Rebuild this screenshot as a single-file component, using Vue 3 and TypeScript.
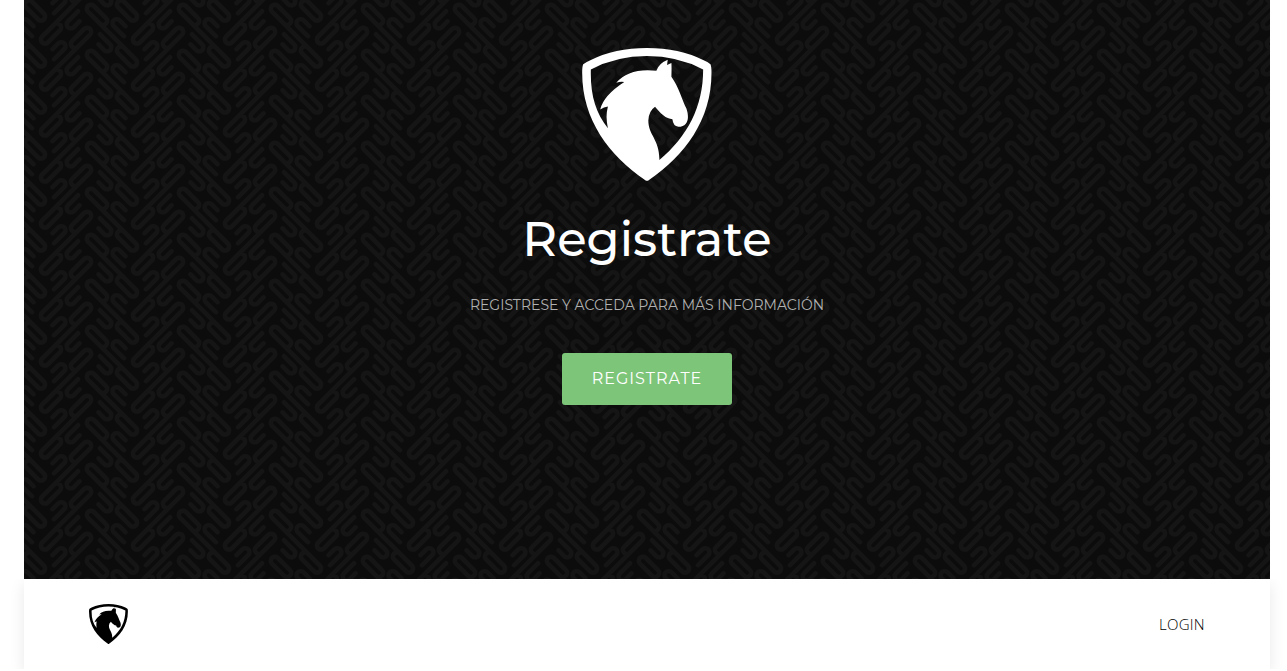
<script setup lang="ts">
interface Action {
  label: string
}

const title = 'Registrate'
const subtitle = 'REGISTRESE Y ACCEDA PARA MÁS INFORMACIÓN'
const action: Action = { label: 'REGISTRATE' }
const links: string[] = ['LOGIN']
</script>

<template>
  <div class="page">
    <svg width="0" height="0" class="defs">
      <symbol id="horse-shield" viewBox="30 24 388 398">
        <path
          fill-rule="evenodd"
          d="M33 73Q40 67 56 60Q127 24 224 24Q321 24 392 60Q407 66 414 73Q417 80 417 98C417 240 337 345 230 419Q224 424 218 419C111 345 30 240 30 98Q30 80 33 73ZM56 88C54 164 70 218 107 264Q99 230 107 199Q95 201 84 208Q94 166 156 126Q145 124 132 128Q170 83 252 92Q259 70 286 59L284 75L297 69Q298 82 297 110C319 140 329 180 342 205C352 235 346 260 318 260Q302 257 300 237C282 237 263 219 248 200Q229 213 228 241C228 285 262 298 261 359C345 288 392 200 392 88Q315 48 224 48Q133 48 56 88Z"
        />
      </symbol>
    </svg>

    <section class="hero">
      <svg class="texture" width="100%" height="100%">
        <defs>
          <g id="weave">
            <path
              d="M18.1 66.6L66 18.7A4.1 4.1 0 0 0 60.2 12.9L48.1 25A4.1 4.1 0 0 0 53.9 30.8M18.1 66.6A4.1 4.1 0 0 0 23.9 72.4L35.9 60.4A4.1 4.1 0 0 0 30.1 54.6"
            />
            <path d="M28.5 79.2L34.4 73.3A4.1 4.1 0 0 1 40.2 79.1L30 89.3" />
            <path d="M55.6 51.3L49.7 57.2A4.1 4.1 0 0 1 43.9 51.4L54.1 41.2" />
          </g>
          <g id="weave-pair">
            <use href="#weave" />
            <use href="#weave" transform="translate(130 -23) scale(-1 1)" />
          </g>
          <g id="weave-column">
            <use href="#weave-pair" y="-92" />
            <use href="#weave-pair" y="-46" />
            <use href="#weave-pair" />
            <use href="#weave-pair" y="46" />
          </g>
          <pattern id="hero-pattern" width="92" height="46" y="16" patternUnits="userSpaceOnUse">
            <rect width="92" height="46" fill="#0c0c0c" />
            <g fill="none" stroke="#151515" stroke-width="4.4" stroke-linecap="round">
              <use href="#weave-column" x="-92" />
              <use href="#weave-column" />
            </g>
          </pattern>
        </defs>
        <rect width="100%" height="100%" fill="url(#hero-pattern)" />
      </svg>
      <div class="content">
        <svg class="emblem"><use href="#horse-shield" /></svg>
        <h1>{{ title }}</h1>
        <p>{{ subtitle }}</p>
        <button type="button">{{ action.label }}</button>
      </div>
    </section>

    <header class="bar">
      <svg class="logo"><use href="#horse-shield" /></svg>
      <nav>
        <a v-for="link in links" :key="link">{{ link }}</a>
      </nav>
    </header>
  </div>
</template>

<style>
body {
  background: #fff;
  overflow: hidden;
}
</style>

<style scoped>
.page {
  width: 1246px;
  margin-left: 24px;
  font-family: Montserrat, Inter, sans-serif;
}
.defs {
  display: block;
}
.hero {
  position: relative;
  height: 579px;
  background: #0c0c0c;
}
.texture {
  position: absolute;
  inset: 0;
}
.content {
  position: relative;
  display: flex;
  flex-direction: column;
  align-items: center;
  padding-top: 48px;
}
.emblem {
  width: 130px;
  height: 133px;
  fill: #fff;
}
h1 {
  margin: 29px 0 0;
  font-size: 48px;
  line-height: 58px;
  font-weight: 500;
  color: #fff;
}
p {
  margin: 27px 0 0;
  font-size: 14px;
  line-height: 20px;
  font-weight: 400;
  color: #b0b0b0;
  white-space: nowrap;
}
button {
  width: 170px;
  height: 52px;
  margin-top: 38px;
  padding: 0 0 2px;
  border: 0;
  border-radius: 3px;
  background: #7dc579;
  color: #fff;
  font: 400 16px Montserrat, Inter, sans-serif;
  letter-spacing: 1px;
}
.bar {
  display: flex;
  align-items: center;
  justify-content: space-between;
  height: 90px;
  box-sizing: border-box;
  padding: 0 65px;
  background: #fff;
  box-shadow: 0 5px 15px rgba(0, 0, 0, 0.09);
  clip-path: inset(0 -20px -20px -20px);
}
.logo {
  width: 39px;
  height: 40px;
  fill: #000;
}
nav a {
  font: 300 15px/20px 'Open Sans', 'Noto Sans', sans-serif;
  letter-spacing: 0.3px;
  color: #000;
}
</style>
